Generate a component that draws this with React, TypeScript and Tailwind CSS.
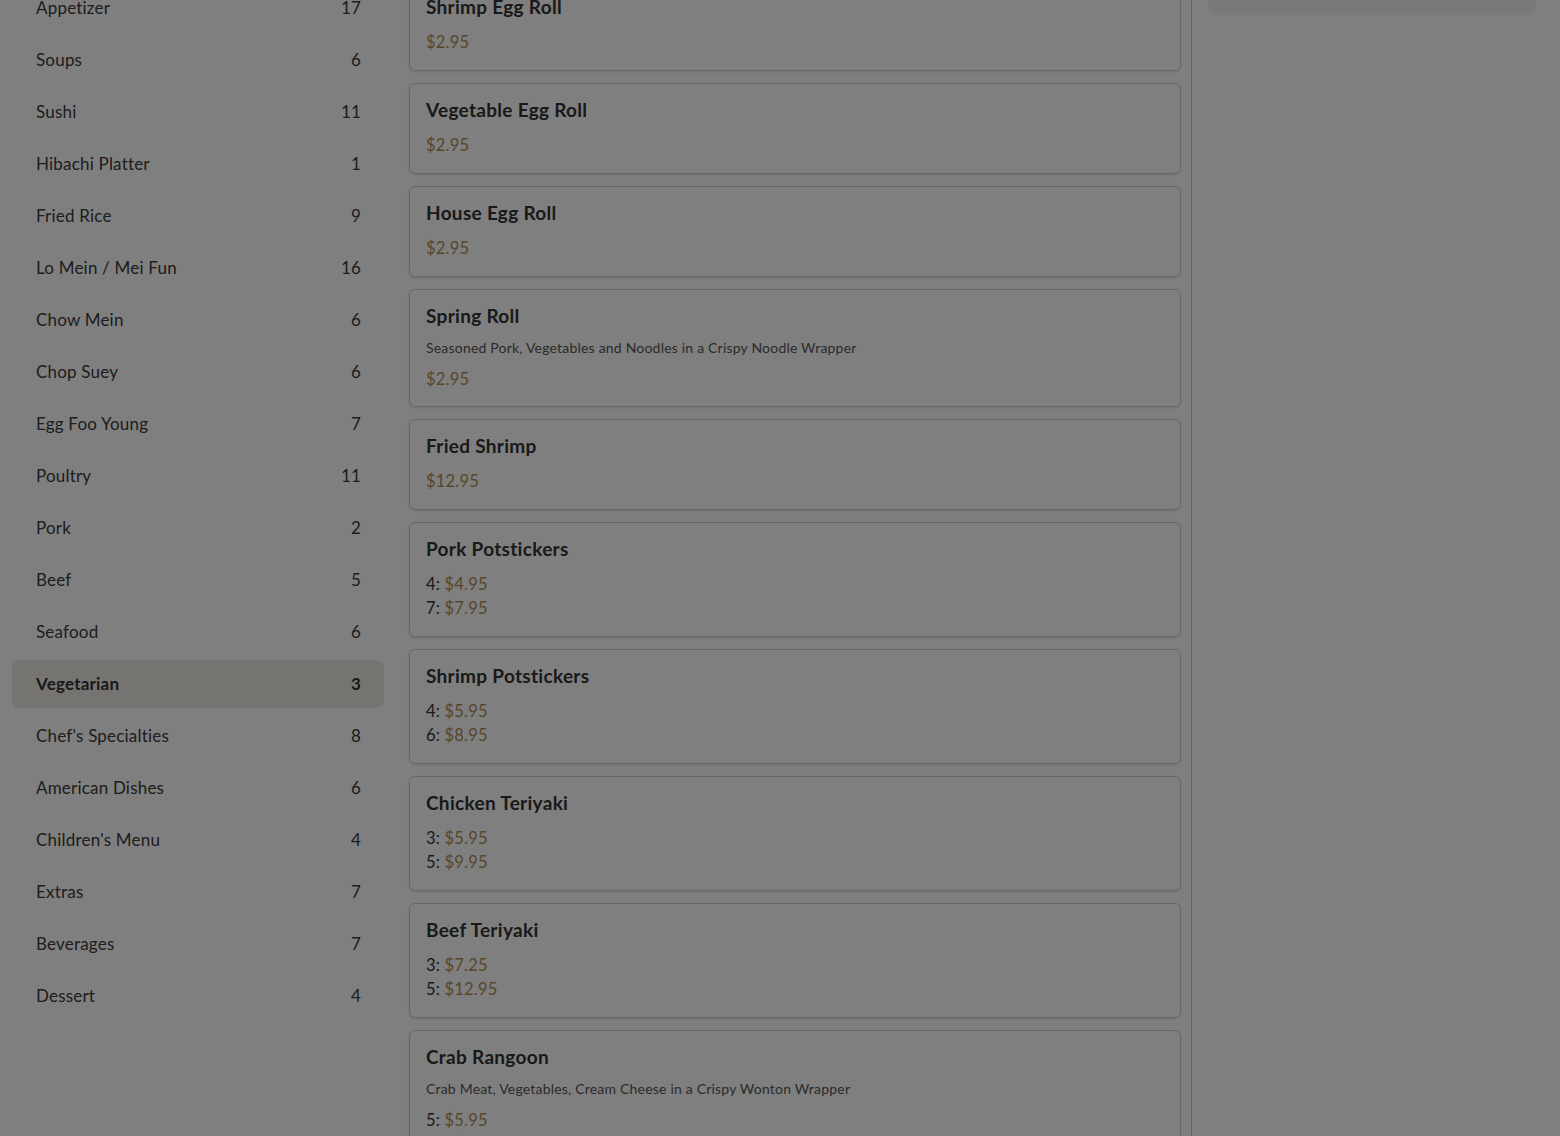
import React from 'react';

type Category = { name: string; count: number };
type Price = { label?: string; value: string };
type Item = { name: string; desc?: string; prices: Price[] };

const categories: Category[] = [
  { name: 'Appetizer', count: 17 },
  { name: 'Soups', count: 6 },
  { name: 'Sushi', count: 11 },
  { name: 'Hibachi Platter', count: 1 },
  { name: 'Fried Rice', count: 9 },
  { name: 'Lo Mein / Mei Fun', count: 16 },
  { name: 'Chow Mein', count: 6 },
  { name: 'Chop Suey', count: 6 },
  { name: 'Egg Foo Young', count: 7 },
  { name: 'Poultry', count: 11 },
  { name: 'Pork', count: 2 },
  { name: 'Beef', count: 5 },
  { name: 'Seafood', count: 6 },
  { name: 'Vegetarian', count: 3 },
  { name: "Chef's Specialties", count: 8 },
  { name: 'American Dishes', count: 6 },
  { name: "Children's Menu", count: 4 },
  { name: 'Extras', count: 7 },
  { name: 'Beverages', count: 7 },
  { name: 'Dessert', count: 4 },
];

const items: Item[] = [
  { name: 'Shrimp Egg Roll', prices: [{ value: '$2.95' }] },
  { name: 'Vegetable Egg Roll', prices: [{ value: '$2.95' }] },
  { name: 'House Egg Roll', prices: [{ value: '$2.95' }] },
  {
    name: 'Spring Roll',
    desc: 'Seasoned Pork, Vegetables and Noodles in a Crispy Noodle Wrapper',
    prices: [{ value: '$2.95' }],
  },
  { name: 'Fried Shrimp', prices: [{ value: '$12.95' }] },
  { name: 'Pork Potstickers', prices: [{ label: '4', value: '$4.95' }, { label: '7', value: '$7.95' }] },
  { name: 'Shrimp Potstickers', prices: [{ label: '4', value: '$5.95' }, { label: '6', value: '$8.95' }] },
  { name: 'Chicken Teriyaki', prices: [{ label: '3', value: '$5.95' }, { label: '5', value: '$9.95' }] },
  { name: 'Beef Teriyaki', prices: [{ label: '3', value: '$7.25' }, { label: '5', value: '$12.95' }] },
  {
    name: 'Crab Rangoon',
    desc: 'Crab Meat, Vegetables, Cream Cheese in a Crispy Wonton Wrapper',
    prices: [{ label: '5', value: '$5.95' }, { label: '10', value: '$9.95' }],
  },
];

const MenuCard: React.FC<{ item: Item }> = ({ item }) => (
  <div
    className={
      item.desc
        ? 'bg-white border border-[#cfcfcf] rounded-md shadow-sm px-4 pt-[14px] pb-[15px]'
        : 'bg-white border border-[#cfcfcf] rounded-md shadow-sm px-4 pt-[14px] pb-4'
    }
  >
    <h3 className="text-[19px] leading-6 font-bold tracking-[0.3px] text-[#333]">{item.name}</h3>
    {item.desc && (
      <p className="mt-[10px] text-[14px] leading-5 tracking-[0.2px] text-[#555]">{item.desc}</p>
    )}
    <div className={item.desc ? 'mt-[9px]' : 'mt-[11px]'}>
      {item.prices.map((p, i) => (
        <div key={i} className="text-[16.5px] leading-6 tracking-[0.2px]">
          {p.label && <span className="text-[#333]">{p.label}: </span>}
          <span className="text-[#b28c55]">{p.value}</span>
        </div>
      ))}
    </div>
  </div>
);

export default function App() {
  const selected = 'Vegetarian';

  return (
    <div className="relative h-[1136px] overflow-hidden bg-white font-['Lato','Noto_Sans',sans-serif] text-[#3a3a3a]">
      <div className="flex h-full">
        {/* categories */}
        <aside className="w-[397px] shrink-0 pl-3 pr-[13px]">
          <ul className="mt-[-16px] flex flex-col gap-1">
            {categories.map((c) => {
              const active = c.name === selected;
              return (
                <li
                  key={c.name}
                  className={
                    active
                      ? 'flex h-12 items-center justify-between rounded-lg bg-[#ece9e3] pl-6 pr-[23px] text-[17px] tracking-[0.2px] font-bold text-[#333]'
                      : 'flex h-12 items-center justify-between rounded-lg pl-6 pr-[23px] text-[17px] tracking-[0.2px] text-[#3a3a3a]'
                  }
                >
                  <span>{c.name}</span>
                  <span>{c.count}</span>
                </li>
              );
            })}
          </ul>
        </aside>

        {/* items */}
        <main className="w-[795px] shrink-0 border-r border-[#c4c4c4] pl-3 pr-[10px]">
          <div className="mt-[-20px] flex flex-col gap-3">
            {items.map((it) => (
              <MenuCard key={it.name} item={it} />
            ))}
          </div>
        </main>

        {/* order panel */}
        <section className="flex-1 pl-4 pr-6">
          <div className="mt-[-85px] h-[100px] rounded-lg bg-[#f4f3ef]" />
        </section>
      </div>

      <div className="absolute inset-0 bg-black/50" />
    </div>
  );
}
